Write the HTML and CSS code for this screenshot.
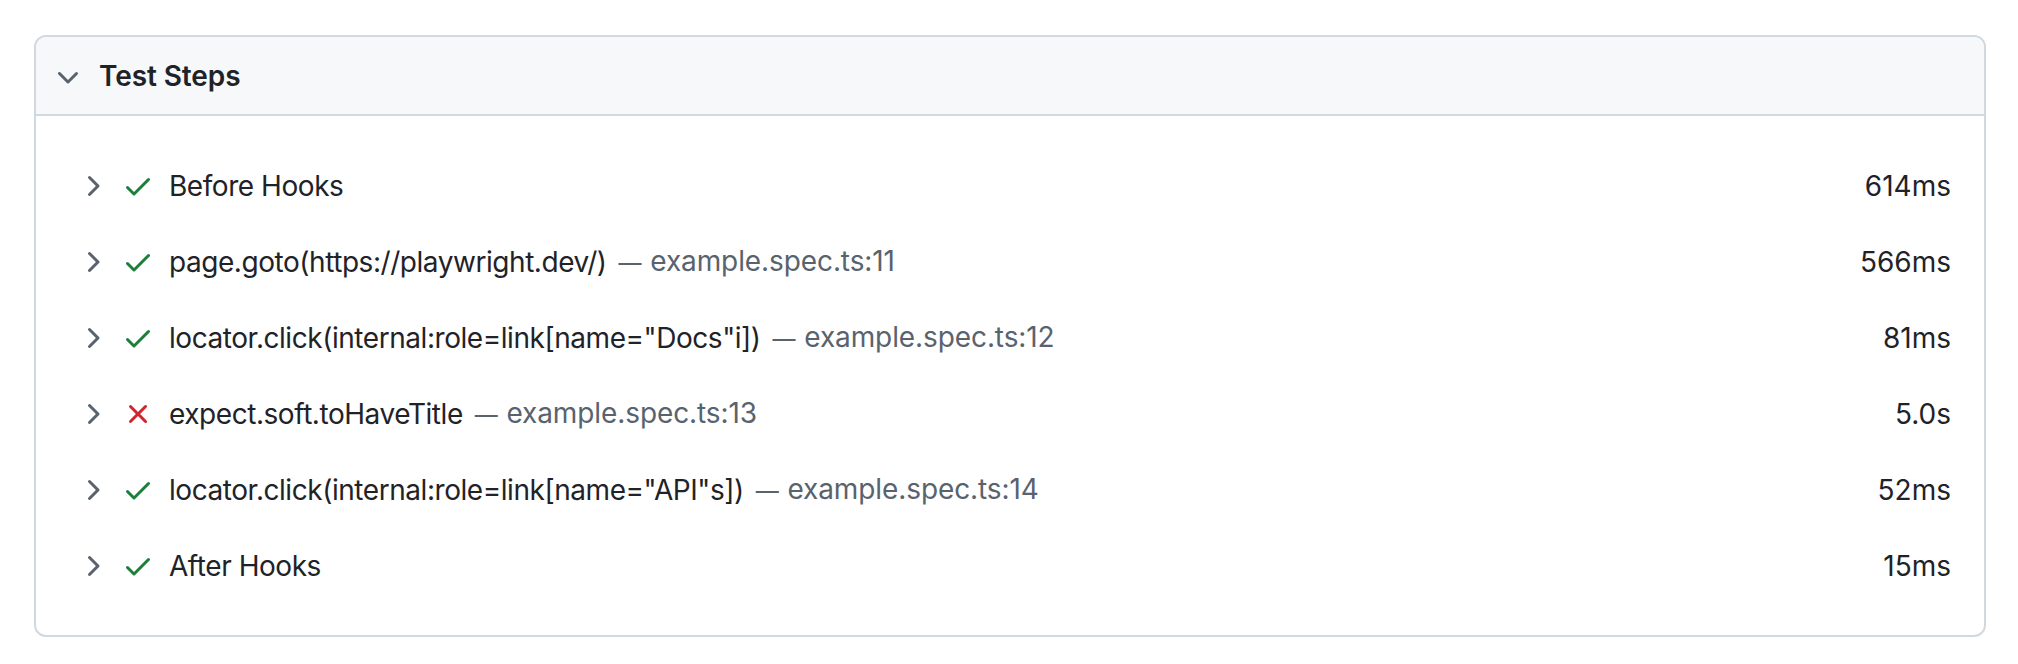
FILE: index.html
```html
<!DOCTYPE html>
<html lang="en">
<head>
<meta charset="utf-8">
<title>Test Steps</title>
<link rel="stylesheet" href="styles.css">
</head>
<body>
<div class="page">
  <section class="card">
    <header class="card-header">
      <svg class="icon icon-header" viewBox="0 0 16 16" width="32" height="32"><path d="M12.78 5.22a.749.749 0 0 1 0 1.06l-4.25 4.25a.749.749 0 0 1-1.06 0L3.22 6.28a.749.749 0 0 1 .326-1.275.749.749 0 0 1 .734.215L8 8.94l3.72-3.72a.749.749 0 0 1 1.06 0Z"/></svg>
      <span class="card-title">Test Steps</span>
    </header>
    <div class="card-body">
      <div class="step">
        <svg class="icon icon-chevron" viewBox="0 0 16 16" width="32" height="32"><path d="M6.22 3.22a.75.75 0 0 1 1.06 0l4.25 4.25a.75.75 0 0 1 0 1.06l-4.25 4.25a.751.751 0 0 1-1.042-.018.751.751 0 0 1-.018-1.042L9.94 8 6.22 4.28a.75.75 0 0 1 0-1.06Z"/></svg>
        <svg class="icon icon-pass" viewBox="0 0 16 16" width="32" height="32"><path d="M13.780 4.22a.75.75 0 0 1 0 1.06l-7.25 7.25a.75.75 0 0 1-1.06 0L2.22 9.28a.751.751 0 0 1 .018-1.042.751.751 0 0 1 1.042-.018L6 10.94l6.72-6.72a.75.75 0 0 1 1.06 0Z"/></svg>
        <span class="step-title">Before Hooks</span>
        <span class="step-duration">614ms</span>
      </div>
      <div class="step">
        <svg class="icon icon-chevron" viewBox="0 0 16 16" width="32" height="32"><path d="M6.22 3.22a.75.75 0 0 1 1.06 0l4.25 4.25a.75.75 0 0 1 0 1.06l-4.25 4.25a.751.751 0 0 1-1.042-.018.751.751 0 0 1-.018-1.042L9.94 8 6.22 4.28a.75.75 0 0 1 0-1.06Z"/></svg>
        <svg class="icon icon-pass" viewBox="0 0 16 16" width="32" height="32"><path d="M13.78 4.22a.75.75 0 0 1 0 1.06l-7.25 7.25a.75.75 0 0 1-1.06 0L2.22 9.28a.751.751 0 0 1 .018-1.042.751.751 0 0 1 1.042-.018L6 10.94l6.72-6.72a.75.75 0 0 1 1.06 0Z"/></svg>
        <span class="step-title">page.goto(https://playwright.dev/)</span><span class="step-path"><span class="dash">—</span> example.spec.ts:11</span>
        <span class="step-duration">566ms</span>
      </div>
      <div class="step">
        <svg class="icon icon-chevron" viewBox="0 0 16 16" width="32" height="32"><path d="M6.22 3.22a.75.75 0 0 1 1.06 0l4.25 4.25a.75.75 0 0 1 0 1.06l-4.25 4.25a.751.751 0 0 1-1.042-.018.751.751 0 0 1-.018-1.042L9.94 8 6.22 4.28a.75.75 0 0 1 0-1.06Z"/></svg>
        <svg class="icon icon-pass" viewBox="0 0 16 16" width="32" height="32"><path d="M13.78 4.22a.75.75 0 0 1 0 1.06l-7.25 7.25a.75.75 0 0 1-1.06 0L2.22 9.28a.751.751 0 0 1 .018-1.042.751.751 0 0 1 1.042-.018L6 10.94l6.72-6.72a.75.75 0 0 1 1.06 0Z"/></svg>
        <span class="step-title">locator.click(internal:role=link[name="Docs"i])</span><span class="step-path"><span class="dash">—</span> example.spec.ts:12</span>
        <span class="step-duration">81ms</span>
      </div>
      <div class="step">
        <svg class="icon icon-chevron" viewBox="0 0 16 16" width="32" height="32"><path d="M6.22 3.22a.75.75 0 0 1 1.06 0l4.25 4.25a.75.75 0 0 1 0 1.06l-4.25 4.25a.751.751 0 0 1-1.042-.018.751.751 0 0 1-.018-1.042L9.94 8 6.22 4.28a.75.75 0 0 1 0-1.06Z"/></svg>
        <svg class="icon icon-fail" viewBox="0 0 16 16" width="32" height="32"><path d="M3.72 3.72a.75.75 0 0 1 1.06 0L8 6.94l3.22-3.22a.749.749 0 0 1 1.275.326.749.749 0 0 1-.215.734L9.06 8l3.22 3.22a.749.749 0 0 1-.326 1.275.749.749 0 0 1-.734-.215L8 9.06l-3.22 3.22a.751.751 0 0 1-1.042-.018.751.751 0 0 1-.018-1.042L6.94 8 3.72 4.78a.75.75 0 0 1 0-1.06Z"/></svg>
        <span class="step-title">expect.soft.toHaveTitle</span><span class="step-path"><span class="dash">—</span> example.spec.ts:13</span>
        <span class="step-duration">5.0s</span>
      </div>
      <div class="step">
        <svg class="icon icon-chevron" viewBox="0 0 16 16" width="32" height="32"><path d="M6.22 3.22a.75.75 0 0 1 1.06 0l4.25 4.25a.75.75 0 0 1 0 1.06l-4.25 4.25a.751.751 0 0 1-1.042-.018.751.751 0 0 1-.018-1.042L9.94 8 6.22 4.28a.75.75 0 0 1 0-1.06Z"/></svg>
        <svg class="icon icon-pass" viewBox="0 0 16 16" width="32" height="32"><path d="M13.78 4.22a.75.75 0 0 1 0 1.06l-7.25 7.25a.75.75 0 0 1-1.06 0L2.22 9.28a.751.751 0 0 1 .018-1.042.751.751 0 0 1 1.042-.018L6 10.94l6.72-6.72a.75.75 0 0 1 1.06 0Z"/></svg>
        <span class="step-title">locator.click(internal:role=link[name="API"s])</span><span class="step-path"><span class="dash">—</span> example.spec.ts:14</span>
        <span class="step-duration">52ms</span>
      </div>
      <div class="step">
        <svg class="icon icon-chevron" viewBox="0 0 16 16" width="32" height="32"><path d="M6.22 3.22a.75.75 0 0 1 1.06 0l4.25 4.25a.75.75 0 0 1 0 1.06l-4.25 4.25a.751.751 0 0 1-1.042-.018.751.751 0 0 1-.018-1.042L9.94 8 6.22 4.28a.75.75 0 0 1 0-1.06Z"/></svg>
        <svg class="icon icon-pass" viewBox="0 0 16 16" width="32" height="32"><path d="M13.78 4.22a.75.75 0 0 1 0 1.06l-7.25 7.25a.75.75 0 0 1-1.06 0L2.22 9.28a.751.751 0 0 1 .018-1.042.751.751 0 0 1 1.042-.018L6 10.94l6.72-6.72a.75.75 0 0 1 1.06 0Z"/></svg>
        <span class="step-title">After Hooks</span>
        <span class="step-duration">15ms</span>
      </div>
    </div>
  </section>
</div>
</body>
</html>
```

FILE: styles.css
```css
html, body {
  margin: 0;
  padding: 0;
  background: #ffffff;
}

body {
  font-family: Inter, "Noto Sans", "Liberation Sans", sans-serif;
  font-size: 28px;
  color: #1f2328;
}

.page {
  padding: 35px 32px 0 34px;
}

.card {
  border: 2px solid #d1d9e0;
  border-radius: 12px;
  overflow: hidden;
  background: #ffffff;
}

.card-header {
  display: flex;
  align-items: center;
  height: 77px;
  padding-left: 16px;
  background: #f6f8fa;
  border-bottom: 2px solid #d1d9e0;
}

.icon {
  flex: none;
  display: block;
}

.icon-header {
  fill: #59636e;
  margin-top: 4px;
  margin-right: 15px;
}

.card-title {
  font-weight: 600;
  line-height: 40px;
  letter-spacing: -0.1px;
}

.card-body {
  padding: 32px 33px 31px 40px;
}

.step {
  display: flex;
  align-items: center;
  height: 76px;
  line-height: 76px;
  white-space: nowrap;
}

.icon-chevron {
  fill: #59636e;
  margin-right: 14px;
}

.icon-pass {
  fill: #1a7f37;
  margin-right: 15px;
}

.icon-fail {
  fill: #d1242f;
  margin-right: 15px;
}

.step-title {
  letter-spacing: -0.45px;
}

.step-path {
  color: #59636e;
  padding-left: 12px;
  letter-spacing: -0.1px;
}

.dash {
  font-size: 23px;
  margin-right: 1px;
}

.step-duration {
  margin-left: auto;
}
```
